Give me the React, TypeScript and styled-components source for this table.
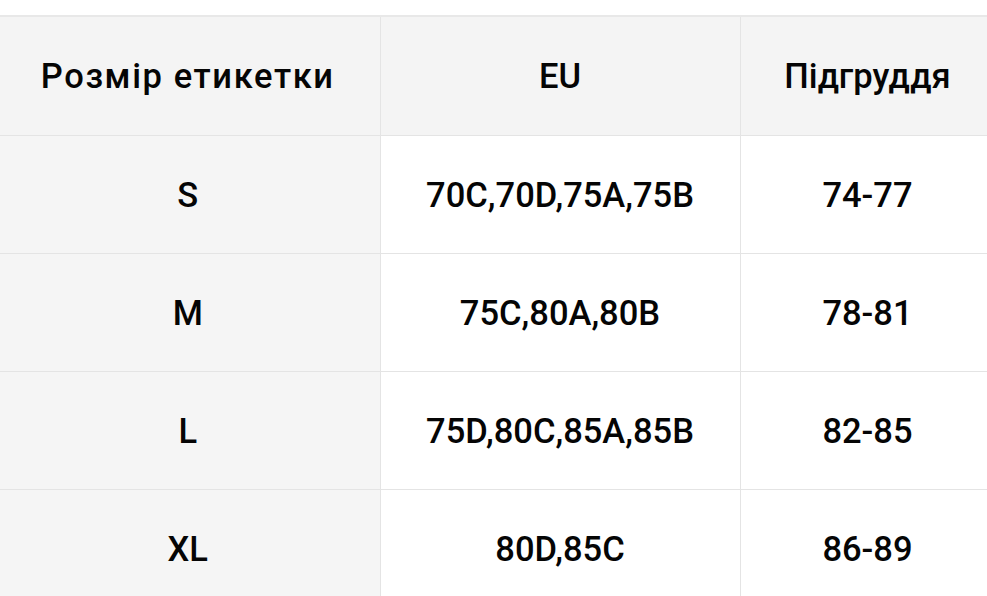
import React from 'react';
import styled, { createGlobalStyle } from 'styled-components';

const GlobalStyle = createGlobalStyle`
  html, body {
    margin: 0;
    padding: 0;
    background: #ffffff;
    overflow: hidden;
  }
  body {
    font-family: Roboto, "Liberation Sans", Arial, sans-serif;
  }
`;

const Page = styled.div`
  padding-top: 15px;
  margin-left: -4px;
  width: 1000px;
`;

const Table = styled.table`
  border-collapse: collapse;
  table-layout: fixed;
  width: 999px;
  border-top: 2px solid #e8e8e8;
`;

const HeadCell = styled.th<{ $wide?: boolean }>`
  height: 118px;
  padding: 0;
  background: #f4f4f4;
  color: #050505;
  font-size: 34.5px;
  font-weight: 500;
  letter-spacing: ${p => (p.$wide ? '1.6px' : '0')};
  text-align: center;
  vertical-align: middle;
  border-right: 1px solid #e4e4e4;
  border-bottom: 1px solid #e4e4e4;
`;

const Cell = styled.td<{ $shaded?: boolean }>`
  height: 117px;
  padding: 0;
  background: ${p => (p.$shaded ? '#f5f5f5' : '#ffffff')};
  color: #050505;
  font-size: 34.5px;
  font-weight: 500;
  text-align: center;
  vertical-align: middle;
  border-right: 1px solid #e4e4e4;
  border-bottom: 1px solid #e4e4e4;
`;

const rows = [
  { label: 'S', eu: '70C,70D,75A,75B', bust: '74-77' },
  { label: 'M', eu: '75C,80A,80B', bust: '78-81' },
  { label: 'L', eu: '75D,80C,85A,85B', bust: '82-85' },
  { label: 'XL', eu: '80D,85C', bust: '86-89' },
];

export default function App() {
  return (
    <>
      <GlobalStyle />
      <Page>
        <Table>
          <colgroup>
            <col style={{ width: 384 }} />
            <col style={{ width: 360 }} />
            <col style={{ width: 255 }} />
          </colgroup>
          <thead>
            <tr>
              <HeadCell $wide>Розмір етикетки</HeadCell>
              <HeadCell>EU</HeadCell>
              <HeadCell>Підгруддя</HeadCell>
            </tr>
          </thead>
          <tbody>
            {rows.map(r => (
              <tr key={r.label}>
                <Cell $shaded>{r.label}</Cell>
                <Cell>{r.eu}</Cell>
                <Cell>{r.bust}</Cell>
              </tr>
            ))}
          </tbody>
        </Table>
      </Page>
    </>
  );
}
